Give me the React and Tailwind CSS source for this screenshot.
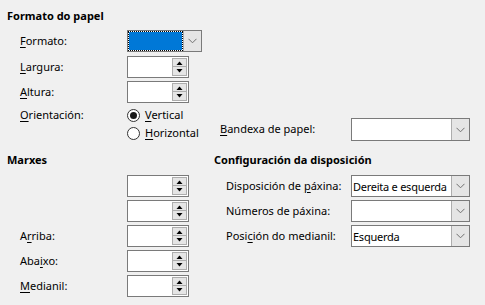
import React from "react";

const Chevron = () => (
  <svg width="9" height="6" viewBox="0 0 9 6" className="block">
    <polyline points="0.5,0.8 4.5,4.8 8.5,0.8" fill="none" stroke="#707070" strokeWidth="1" />
  </svg>
);

const U = ({ children }) => <span className="underline underline-offset-2">{children}</span>;

function Dropdown({ w = "w-[119px]", h = "h-[22px]", value, focused }) {
  return (
    <div className={`${w} ${h} flex border border-[#7a7a7a] bg-white`}>
      {focused ? (
        <div className="flex-1 bg-[#0078d7] bg-clip-padding border border-dotted border-black" />
      ) : (
        <div className="flex-1 flex items-center pl-[1px] leading-none whitespace-nowrap overflow-hidden tracking-[-0.25px]">{value}</div>
      )}
      <div className="w-[18px] bg-[#e5e5e5] border-l border-[#adadad] flex items-center justify-center">
        <Chevron />
      </div>
    </div>
  );
}

const Tri = ({ up }) => (
  <svg width="7" height="4" viewBox="0 0 7 4" className="block">
    {up ? <polygon points="0.5,4 6.5,4 3.5,0.5" fill="#000" /> : <polygon points="0.5,0 6.5,0 3.5,3.5" fill="#000" />}
  </svg>
);

function Spin() {
  return (
    <div className="w-[62px] h-[22px] flex border border-[#7a7a7a] bg-white">
      <div className="flex-1" />
      <div className="w-[16px] flex flex-col py-[1px] pr-[1px]">
        <div className="h-[10px] bg-[#e5e5e5] border border-[#adadad] flex items-center justify-center">
          <Tri up />
        </div>
        <div className="h-[10px] bg-[#e5e5e5] border border-[#adadad] border-t-0 flex items-center justify-center">
          <Tri />
        </div>
      </div>
    </div>
  );
}

function Radio({ checked, children }) {
  return (
    <div className="h-[18px] flex items-center">
      <div className="w-[13px] h-[13px] rounded-full border border-[#333] bg-white flex items-center justify-center">
        {checked && <div className="w-[7px] h-[7px] rounded-full bg-[#1a1a1a]" />}
      </div>
      <span className="ml-[5px] whitespace-nowrap">{children}</span>
    </div>
  );
}

export default function App() {
  return (
    <div
      className="w-[485px] h-[305px] bg-[#f0f0f0] text-[11px] text-black overflow-hidden"
      style={{ fontFamily: '"Noto Sans", "Liberation Sans", sans-serif' }}
    >
      <div className="pt-[9px] pl-[7px] h-[23px] font-bold leading-[14px]">Formato do papel</div>

      <div className="mt-[7px] flex items-center h-[22px] pl-[20px]">
        <div className="w-[107px]"><U>F</U>ormato:</div>
        <Dropdown w="w-[75px]" focused />
      </div>
      <div className="mt-[4px] flex items-center h-[22px] pl-[20px]">
        <div className="w-[107px]"><U>L</U>argura:</div>
        <Spin />
      </div>
      <div className="mt-[3px] flex items-center h-[22px] pl-[20px]">
        <div className="w-[107px]"><U>A</U>ltura:</div>
        <Spin />
      </div>

      <div className="mt-[3px] flex items-start pl-[20px]">
        <div className="w-[107px] h-[18px] flex items-center"><U>O</U>rientación:</div>
        <div className="w-[93px] flex flex-col">
          <Radio checked><U>V</U>ertical</Radio>
          <Radio><U>H</U>orizontal</Radio>
        </div>
        <div className="mt-[12px] flex items-center">
          <div className="w-[131px]"><U>B</U>andexa de papel:</div>
          <Dropdown w="w-[119px]" h="h-[23px]" value="" />
        </div>
      </div>

      <div className="mt-[11px] flex">
        <div className="w-[200px] flex flex-col">
          <div className="pl-[7px] h-[14px] leading-[14px] font-bold">Marxes</div>
          <div className="mt-[8px] flex flex-col gap-[3px]">
            {[
              null,
              null,
              <>A<U>r</U>riba:</>,
              <>Aba<U>i</U>xo:</>,
              <><U>M</U>edianil:</>,
            ].map((l, i) => (
              <div key={i} className="flex items-center h-[22px] pl-[20px]">
                <div className="w-[107px]">{l}</div>
                <Spin />
              </div>
            ))}
          </div>
        </div>
        <div className="flex flex-col">
          <div className="pl-[14px] h-[14px] leading-[14px] font-bold whitespace-nowrap">Configuración da disposición</div>
          <div className="mt-[8px] flex flex-col gap-[3px]">
            <div className="flex items-center h-[22px] pl-[26px]">
              <div className="w-[125px] whitespace-nowrap">Disposición de <U>p</U>áxina:</div>
              <Dropdown value="Dereita e esquerda" />
            </div>
            <div className="flex items-center h-[22px] pl-[26px]">
              <div className="w-[125px] whitespace-nowrap">Números de páxina:</div>
              <Dropdown value="" />
            </div>
            <div className="flex items-center h-[22px] pl-[26px]">
              <div className="w-[125px] whitespace-nowrap">Posi<U>c</U>ión do medianil:</div>
              <Dropdown value="Esquerda" />
            </div>
          </div>
        </div>
      </div>
    </div>
  );
}
